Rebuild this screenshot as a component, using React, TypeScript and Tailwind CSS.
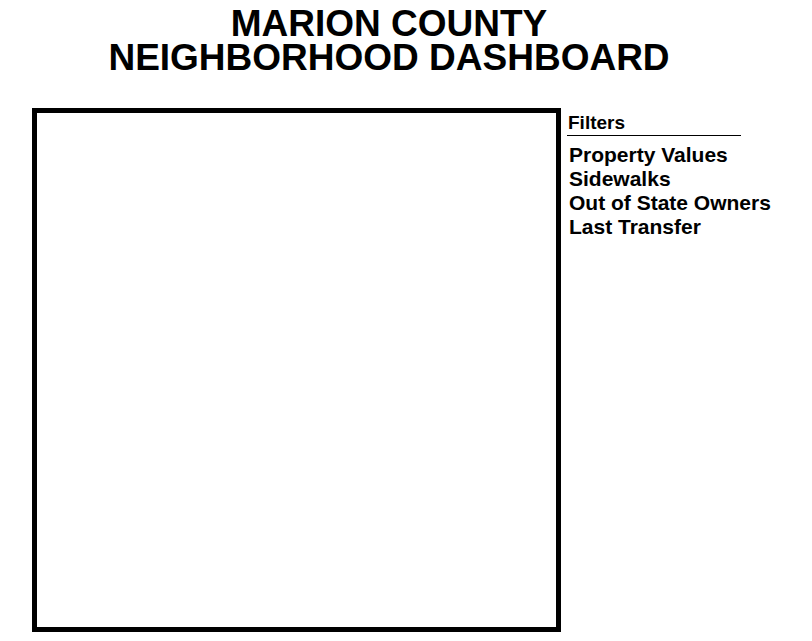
import React from "react";

export default function App() {
  const items = ["Property Values", "Sidewalks", "Out of State Owners", "Last Transfer"];
  return (
    <div className="w-[812px] h-[641px] bg-white overflow-hidden" style={{ fontFamily: '"Liberation Sans", Arial, sans-serif' }}>
      <div className="w-[778px] pt-[7px] text-center font-bold text-black text-[37px] leading-[34px]">
        <div>MARION COUNTY</div>
        <div>NEIGHBORHOOD DASHBOARD</div>
      </div>
      <div className="flex mt-[33px] pl-8">
        <div className="w-[529px] h-[524px] border-[5px] border-black shrink-0"></div>
        <div className="ml-[6px] mt-[4px] text-black font-bold">
          <div className="w-[174px] border-b border-black text-[19px] leading-[21px] pl-[1px] pb-[2px]">Filters</div>
          <div className="mt-[7px] pl-[2px] text-[21px] leading-[24px]">
            {items.map((t) => (
              <div key={t}>{t}</div>
            ))}
          </div>
        </div>
      </div>
    </div>
  );
}
